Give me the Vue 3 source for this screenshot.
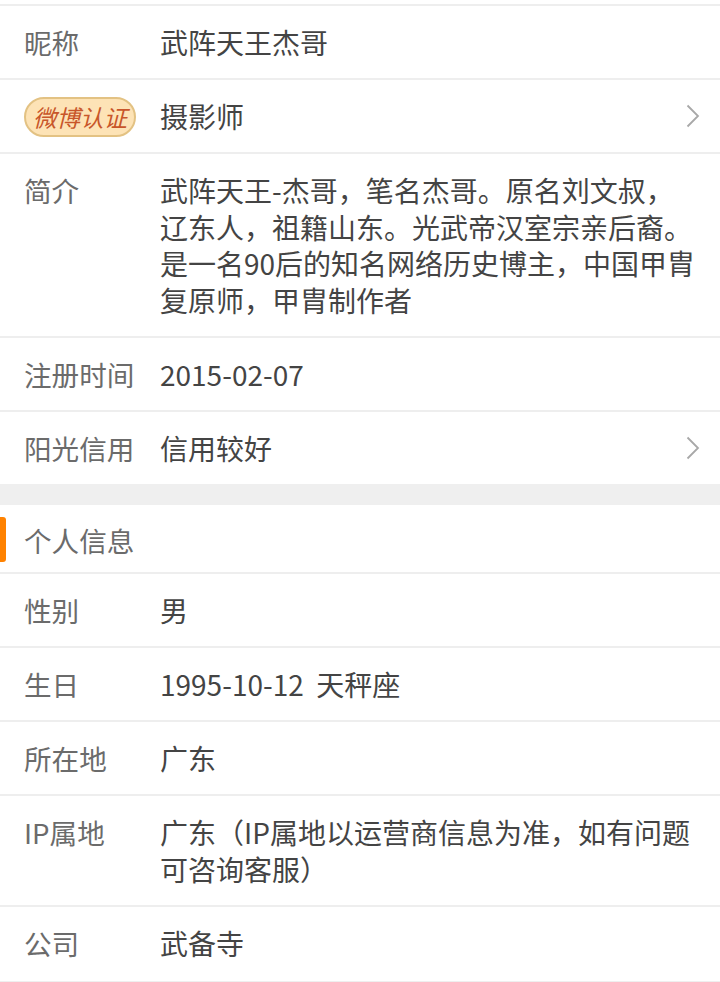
<script setup>
const group1 = [
  { label: '昵称', value: ['武阵天王杰哥'] },
  { badge: '微博认证', value: ['摄影师'], arrow: true },
  { label: '简介', value: ['武阵天王-杰哥，笔名杰哥。原名刘文叔，', '辽东人，祖籍山东。光武帝汉室宗亲后裔。', '是一名90后的知名网络历史博主，中国甲胄', '复原师，甲胄制作者'] },
  { label: '注册时间', value: ['2015-02-07'] },
  { label: '阳光信用', value: ['信用较好'], arrow: true }
]
const group2 = [
  { label: '性别', value: ['男'] },
  { label: '生日', value: ['1995-10-12  天秤座'] },
  { label: '所在地', value: ['广东'] },
  { label: 'IP属地', value: ['广东（IP属地以运营商信息为准，如有问题', '可咨询客服）'] },
  { label: '公司', value: ['武备寺'] }
]
</script>

<template>
  <div class="page">
    <div class="top-cap"></div>
    <section class="group">
      <div v-for="(r, i) in group1" :key="i" class="row">
        <div class="label">
          <span v-if="r.badge" class="badge">{{ r.badge }}</span>
          <template v-else>{{ r.label }}</template>
        </div>
        <div class="value"><div v-for="l in r.value" :key="l" class="line">{{ l }}</div></div>
        <svg v-if="r.arrow" class="arrow" width="14" height="24" viewBox="0 0 14 24" fill="none">
          <path d="M1.5 1.5 L12 12 L1.5 22.5" stroke="#a8a8a8" stroke-width="1.8" />
        </svg>
      </div>
    </section>
    <div class="gap"></div>
    <section class="group">
      <header class="head"><span class="mark"></span>个人信息</header>
      <div v-for="(r, i) in group2" :key="i" class="row">
        <div class="label">{{ r.label }}</div>
        <div class="value"><div v-for="l in r.value" :key="l" class="line">{{ l }}</div></div>
      </div>
    </section>
    <div class="foot"></div>
  </div>
</template>

<style>
html, body { margin: 0; background: #fff; }
</style>
<style scoped>
.page {
  width: 720px;
  height: 982px;
  overflow: hidden;
  background: #fff;
  font-family: "Noto Sans CJK SC", "Noto Sans", sans-serif;
  font-size: 28px;
  color: #444444;
}
.top-cap { height: 4px; }
.row {
  position: relative;
  display: flex;
  box-sizing: border-box;
  border-top: 2px solid #eeeeee;
  padding: 18px 24px 17.33px;
}
.label { width: 136px; flex: none; color: #6b6b6b; font-size: 27.6px; line-height: 36.67px; white-space: nowrap; }
.value { flex: 1; }
.line { height: 36.67px; line-height: 36.67px; white-space: pre; }
.badge {
  display: block;
  box-sizing: border-box;
  width: 112px;
  height: 40px;
  margin: -1px 0 -3px;
  border: 2px solid #e3c283;
  border-radius: 20px;
  background: #fde3b6;
  color: #c8562a;
  font-size: 23.5px;
  line-height: 36px;
  font-style: italic;
  text-align: center;
  white-space: nowrap;
}
.arrow { position: absolute; right: 20px; top: 24px; }
.gap {
  height: 21px;
  background: #efefef;
}
.head {
  position: relative;
  height: 67px;
  padding-left: 24px;
  line-height: 71px;
  color: #6b6b6b;
  font-size: 27.6px;
}
.mark {
  position: absolute;
  left: 0;
  top: 12px;
  width: 6px;
  height: 45px;
  background: #ff8200;
  border-radius: 0 3px 3px 0;
}
.foot { height: 2px; margin-top: 2px; background: #efefef; }
</style>
